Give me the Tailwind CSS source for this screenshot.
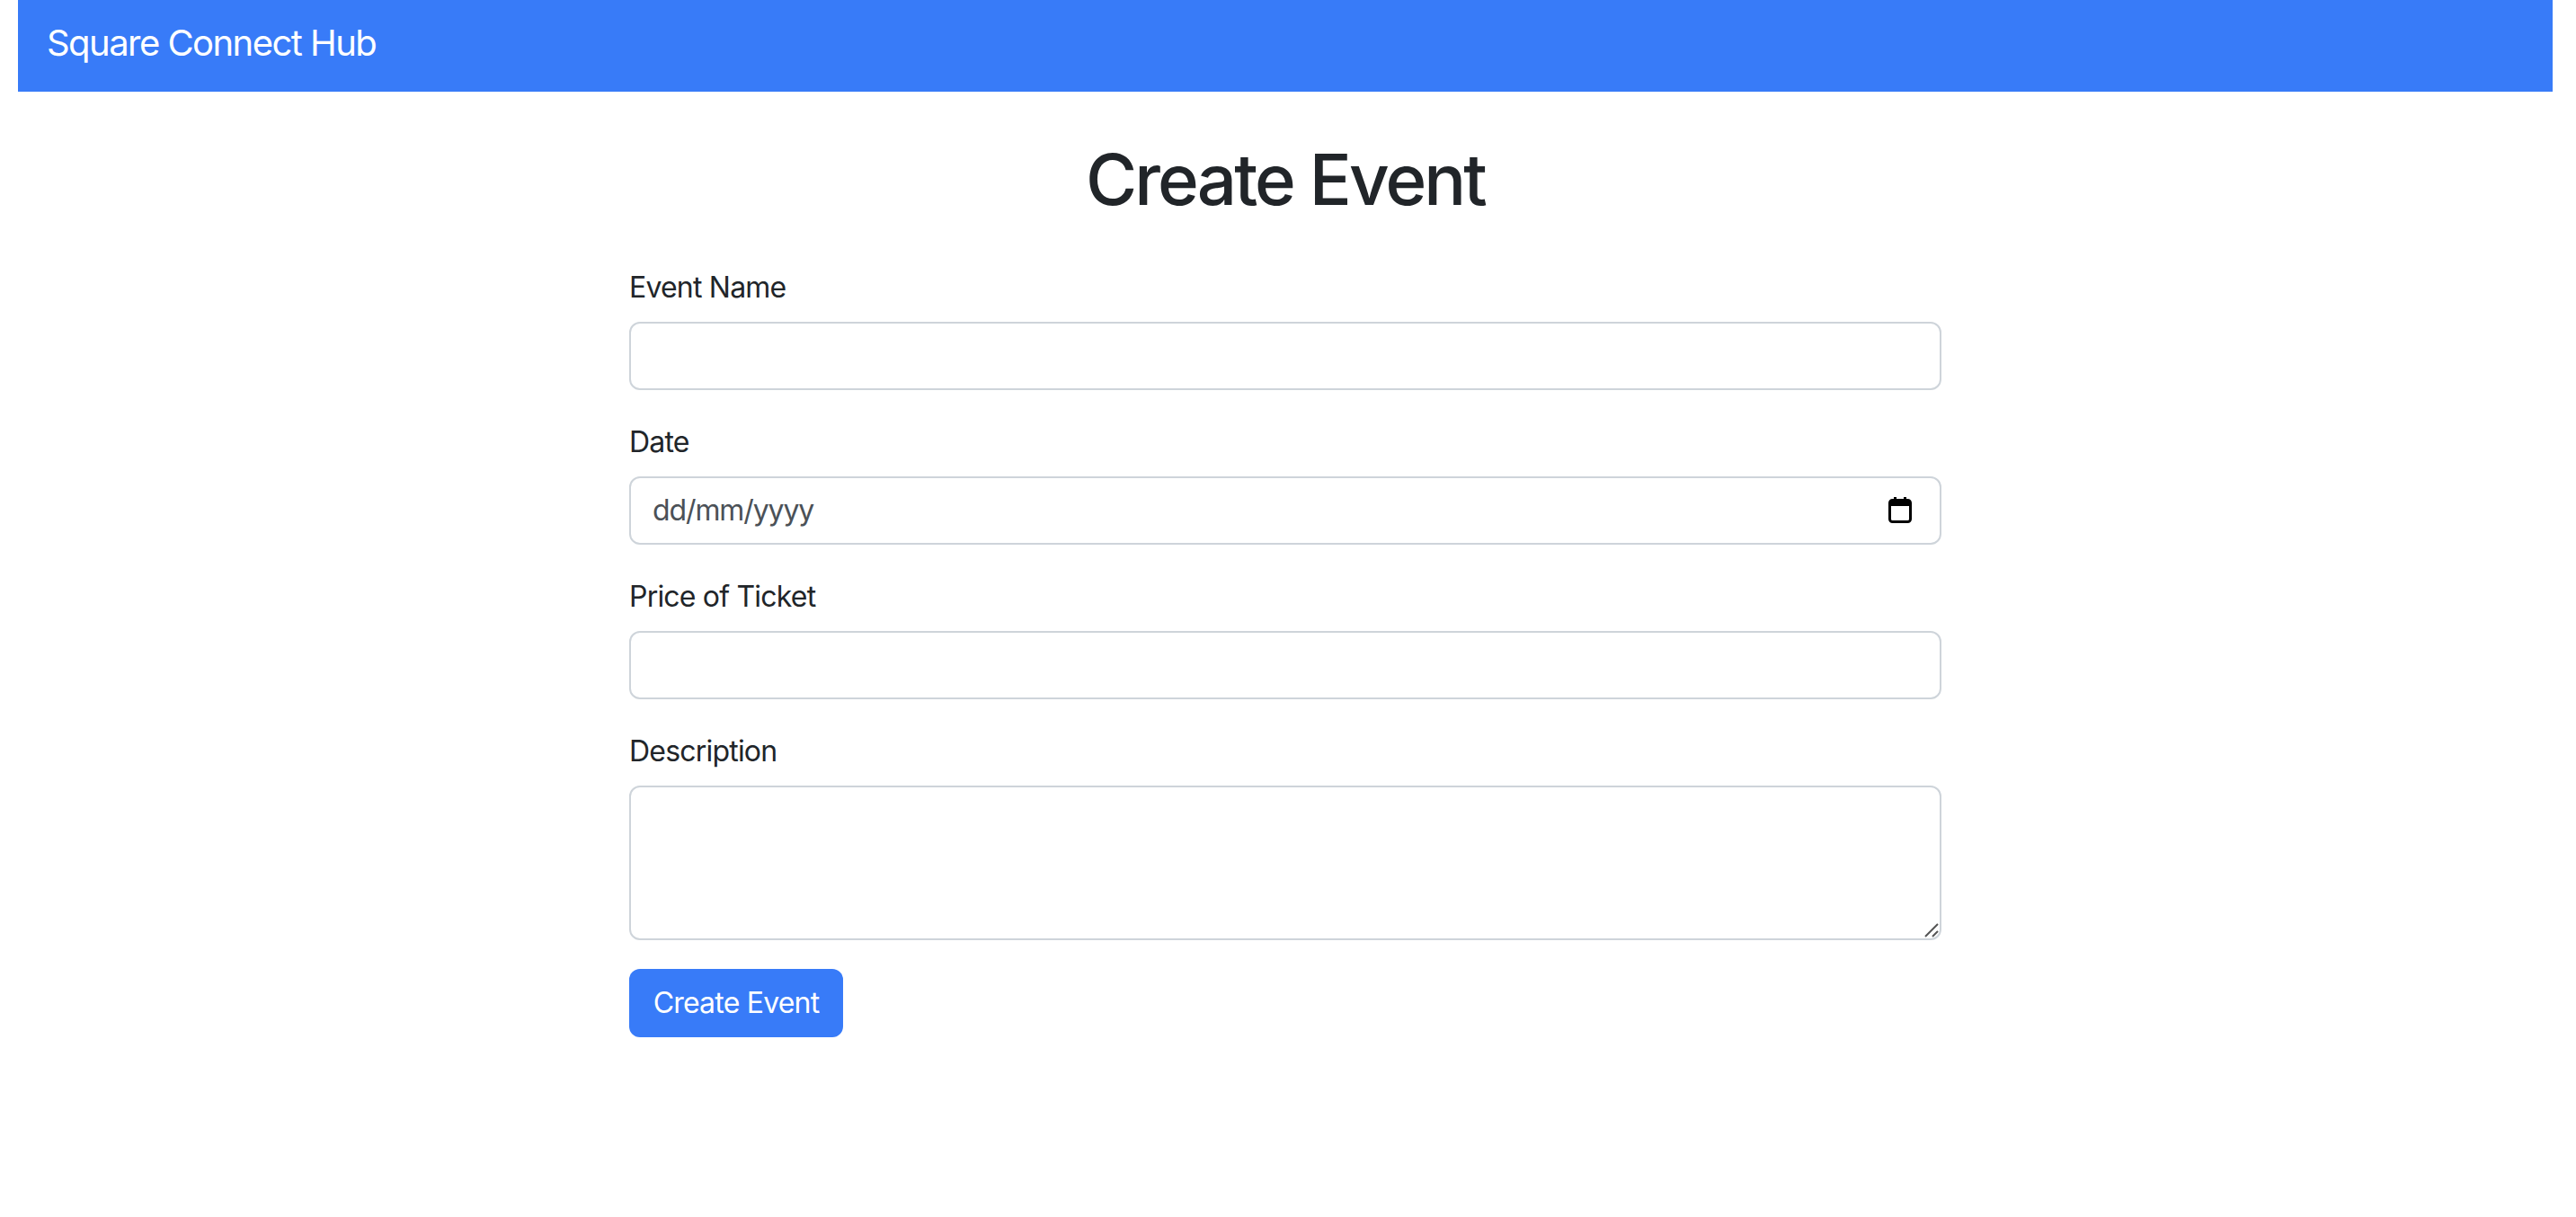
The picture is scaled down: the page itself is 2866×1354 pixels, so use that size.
<!DOCTYPE html>
<html lang="en">
<head>
  <meta charset="UTF-8">
  <title>Create Event</title>
  <script src="https://cdn.jsdelivr.net/npm/@tailwindcss/browser@4"></script>
</head>
<body class="bg-white font-['Inter',sans-serif] text-[#212529]">

  <div class="pl-[20px] pr-[26px]">
    <!-- Navbar -->
    <nav class="bg-[#387bf8] h-[102px] flex items-start px-[32px] pt-[18px]">
      <a href="#" class="text-[40px] leading-[60px] tracking-[-1.55px] text-white">Square Connect Hub</a>
    </nav>

    <!-- Form -->
    <main class="w-[1460px] mx-auto pt-[48px]">
      <h1 class="text-[78px] leading-[96px] tracking-[-2.9px] font-medium text-center mb-[48px] relative top-[2px]">Create Event</h1>

      <form>
        <div class="mb-[32px]">
          <label class="block text-[32px] leading-[48px] tracking-[-0.8px] mb-[16px] relative top-[2px]">Event Name</label>
          <input type="text" class="block w-full h-[76px] border-2 border-[#ced4da] rounded-[12px] px-[24px] text-[32px] bg-white">
        </div>

        <div class="mb-[32px]">
          <label class="block text-[32px] leading-[48px] tracking-[-0.8px] mb-[16px] relative top-[2px]">Date</label>
          <div class="flex items-center justify-between w-full h-[76px] border-2 border-[#ced4da] rounded-[12px] pl-[24px] pr-[31px] text-[32px] tracking-[-1.1px] text-[#4b5157]">
            <span>dd/mm/yyyy</span>
            <svg class="relative bottom-[1px]" width="26" height="30" viewBox="0 0 26 30" fill="none">
              <rect x="1.5" y="4.5" width="23" height="24" rx="3" stroke="#000" stroke-width="3"/>
              <rect x="2" y="4" width="22" height="7" fill="#000"/>
              <rect x="6" y="1" width="3" height="5" fill="#000"/>
              <rect x="17" y="1" width="3" height="5" fill="#000"/>
            </svg>
          </div>
        </div>

        <div class="mb-[32px]">
          <label class="block text-[32px] leading-[48px] tracking-[-0.8px] mb-[16px] relative top-[2px]">Price of Ticket</label>
          <input type="text" class="block w-full h-[76px] border-2 border-[#ced4da] rounded-[12px] px-[24px] text-[32px] bg-white">
        </div>

        <div class="mb-[32px]">
          <label class="block text-[32px] leading-[48px] tracking-[-0.8px] mb-[16px] relative top-[2px]">Description</label>
          <div class="relative">
            <textarea class="block w-full h-[172px] border-2 border-[#ced4da] rounded-[12px] px-[24px] py-[12px] text-[32px] resize-none bg-white"></textarea>
            <!-- resize grip -->
            <svg class="absolute right-[3px] bottom-[3px]" width="16" height="16" viewBox="0 0 16 16" fill="none">
              <path d="M1 15L15 1M9 15L15 9" stroke="#555" stroke-width="2"/>
            </svg>
          </div>
        </div>

        <button type="button" class="block w-[238px] h-[76px] bg-[#387bf8] text-white text-[32px] tracking-[-0.8px] rounded-[12px]">Create Event</button>
      </form>
    </main>
  </div>

</body>
</html>
